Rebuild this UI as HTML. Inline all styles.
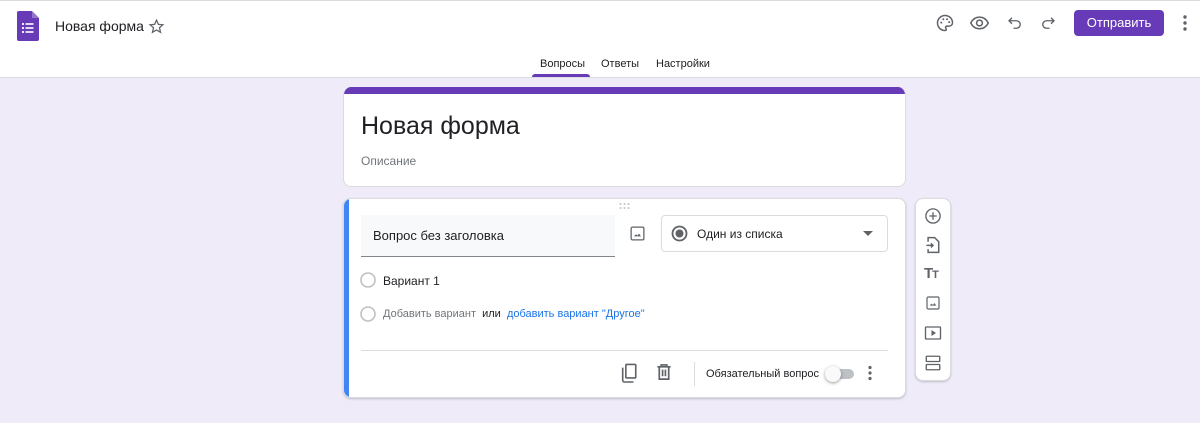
<!DOCTYPE html>
<html><head><meta charset="utf-8"><style>
*{margin:0;padding:0;box-sizing:border-box}
body{width:1200px;height:423px;background:#f0ebf8;font-family:"Liberation Sans",Arial,sans-serif;position:relative;overflow:hidden;color:#202124}
.a{position:absolute}
.hdr{left:0;top:0;width:1200px;height:78px;background:#fff;border-top:1px solid #dadce0;border-bottom:1px solid #dadce0}
.card{background:#fff;border-radius:8px;border:1px solid #dadce0}
svg{display:block}
.ic{fill:none;stroke:#5f6368;stroke-width:1.8}
</style></head><body>
<div class="a hdr"></div>
<svg class="a" style="left:17px;top:11px" width="22" height="30" viewBox="0 0 22 30"><path d="M2 0h13l7 7v21a2 2 0 0 1-2 2H2a2 2 0 0 1-2-2V2a2 2 0 0 1 2-2z" fill="#673ab7"/><path d="M15 0l7 7h-7z" fill="#9575cd"/><g fill="#fff"><circle cx="6" cy="13" r="1.1"/><circle cx="6" cy="17" r="1.1"/><circle cx="6" cy="21" r="1.1"/><rect x="8.5" y="12.2" width="8" height="1.6"/><rect x="8.5" y="16.2" width="8" height="1.6"/><rect x="8.5" y="20.2" width="8" height="1.6"/></g></svg>
<div class="a" style="left:55px;top:18px;font-size:14px;color:#202124">Новая форма</div>
<svg class="a" style="left:148px;top:18px" width="17" height="17" viewBox="0 0 24 24"><path d="M12 3l2.7 6 6.3.6-4.8 4.2 1.5 6.4L12 16.9 6.3 20.2l1.5-6.4L3 9.6l6.3-.6z" class="ic" stroke-width="1.7"/></svg>
<svg class="a" style="left:935px;top:13px" width="20" height="20" viewBox="0 0 24 24"><path d="M12 3a9 9 0 0 0 0 18c1 0 1.5-.7 1.5-1.5 0-1-.8-1.3-.8-2.2 0-1 .8-1.6 1.8-1.6H17a4 4 0 0 0 4-4C21 6.8 17 3 12 3z" class="ic"/><circle cx="7.5" cy="11.5" r="1.2" fill="#5f6368"/><circle cx="10" cy="7.5" r="1.2" fill="#5f6368"/><circle cx="14.5" cy="7.5" r="1.2" fill="#5f6368"/><circle cx="17" cy="11" r="1.2" fill="#5f6368"/></svg>
<svg class="a" style="left:969px;top:13px" width="21" height="20" viewBox="0 0 24 24"><path d="M1.5 12C4 7 8 5 12 5s8 2 10.5 7C20 17 16 19 12 19s-8-2-10.5-7z" class="ic"/><circle cx="12" cy="12" r="3.5" class="ic"/></svg>
<svg class="a" style="left:1006px;top:13px" width="18" height="20" viewBox="0 0 24 24"><path d="M8 5L4 9l4 4M4 9h10a5 5 0 0 1 0 10h-4" class="ic" stroke-width="2"/></svg>
<svg class="a" style="left:1039px;top:13px" width="18" height="20" viewBox="0 0 24 24"><path d="M16 5l4 4-4 4M20 9H10a5 5 0 0 0 0 10h4" class="ic" stroke-width="2"/></svg>
<div class="a" style="left:1074px;top:10px;width:90px;height:26px;background:#673ab7;border-radius:4px;color:#fff;font-size:13px;text-align:center;line-height:26px">Отправить</div>
<svg class="a" style="left:1182px;top:14px" width="6" height="18"><circle cx="3" cy="3" r="1.7" fill="#5f6368"/><circle cx="3" cy="9" r="1.7" fill="#5f6368"/><circle cx="3" cy="15" r="1.7" fill="#5f6368"/></svg>
<div class="a" style="left:540px;top:58px;font-size:11px;color:#202124">Вопросы</div>
<div class="a" style="left:532px;top:74px;width:58px;height:3px;background:#673ab7;border-radius:3px 3px 0 0"></div>
<div class="a" style="left:601px;top:58px;font-size:11px;color:#202124">Ответы</div>
<div class="a" style="left:656px;top:58px;font-size:11px;color:#202124">Настройки</div>
<div class="a card" style="left:343px;top:87px;width:563px;height:100px;border-top:none;overflow:hidden"><div style="height:7px;background:#673ab7"></div></div>
<div class="a" style="left:361px;top:112px;font-size:25px;color:#202124">Новая форма</div>
<div class="a" style="left:361px;top:154px;font-size:12px;color:#70757a">Описание</div>
<div class="a card" style="left:343px;top:198px;width:563px;height:200px;overflow:hidden;box-shadow:0 1px 2px rgba(0,0,0,.2)"><div style="position:absolute;left:0;top:0;width:5px;height:100%;background:#4285f4"></div></div>
<svg class="a" style="left:619px;top:203px" width="12" height="6"><g fill="#bdc1c6"><circle cx="1.5" cy="1" r="1"/><circle cx="5.5" cy="1" r="1"/><circle cx="9.5" cy="1" r="1"/><circle cx="1.5" cy="5" r="1"/><circle cx="5.5" cy="5" r="1"/><circle cx="9.5" cy="5" r="1"/></g></svg>
<div class="a" style="left:361px;top:215px;width:254px;height:42px;background:#f8f9fa;border-bottom:1px solid #80868b"></div>
<div class="a" style="left:373px;top:228px;font-size:13px">Вопрос без заголовка</div>
<svg class="a" style="left:629px;top:225px" width="17" height="17" viewBox="0 0 24 24"><rect x="3" y="3" width="18" height="18" rx="2" class="ic" stroke-width="2"/><path d="M7 16l3-3 2 2 2-3 3 4z" fill="#5f6368"/></svg>
<div class="a" style="left:661px;top:215px;width:227px;height:37px;border:1px solid #dadce0;border-radius:4px"></div>
<svg class="a" style="left:671px;top:225px" width="17" height="17"><circle cx="8.5" cy="8.5" r="7" fill="none" stroke="#5f6368" stroke-width="1.8"/><circle cx="8.5" cy="8.5" r="4" fill="#5f6368"/></svg>
<div class="a" style="left:697px;top:227px;font-size:12px">Один из списка</div>
<svg class="a" style="left:863px;top:231px" width="10" height="6"><path d="M0 0h10L5 5z" fill="#5f6368"/></svg>
<svg class="a" style="left:360px;top:272px" width="16" height="16"><circle cx="8" cy="8" r="7" fill="none" stroke="#bdc1c6" stroke-width="1.6"/></svg>
<div class="a" style="left:383px;top:274px;font-size:12px">Вариант 1</div>
<svg class="a" style="left:360px;top:306px" width="16" height="16"><circle cx="8" cy="8" r="7" fill="none" stroke="#bdc1c6" stroke-width="1.6"/></svg>
<div class="a" style="left:383px;top:308px;font-size:11px;color:#70757a;white-space:nowrap">Добавить вариант <span style="color:#202124">&nbsp;или&nbsp;</span> <span style="color:#1a73e8">добавить вариант "Другое"</span></div>
<div class="a" style="left:361px;top:350px;width:527px;height:1px;background:#dadce0"></div>
<svg class="a" style="left:620px;top:363px" width="18" height="20" viewBox="0 0 20 22"><path d="M3 5v14a2 2 0 0 0 2 2h10" class="ic" stroke-width="1.8"/><rect x="6.5" y="1.5" width="11" height="15" rx="1" class="ic" stroke-width="1.8"/></svg>
<svg class="a" style="left:656px;top:364px" width="16" height="17" viewBox="0 0 16 18"><path d="M1 3h14M5 3V1h6v2M3 3v13h10V3M6.5 6v7M9.5 6v7" class="ic" stroke-width="1.7"/></svg>
<div class="a" style="left:694px;top:362px;width:1px;height:24px;background:#dadce0"></div>
<div class="a" style="left:706px;top:368px;font-size:11px;color:#202124;white-space:nowrap">Обязательный вопрос</div>
<div class="a" style="left:830px;top:369px;width:24px;height:10px;background:#bdc1c6;border-radius:5px"></div>
<div class="a" style="left:825px;top:366px;width:16px;height:16px;background:#fafafa;border-radius:50%;box-shadow:0 1px 3px rgba(0,0,0,.4)"></div>
<svg class="a" style="left:867px;top:365px" width="6" height="16"><circle cx="3" cy="2.5" r="1.6" fill="#5f6368"/><circle cx="3" cy="8" r="1.6" fill="#5f6368"/><circle cx="3" cy="13.5" r="1.6" fill="#5f6368"/></svg>
<div class="a card" style="left:915px;top:198px;width:36px;height:183px;box-shadow:0 1px 2px rgba(0,0,0,.2)"></div>
<svg class="a" style="left:924px;top:207px" width="18" height="18" viewBox="0 0 24 24"><circle cx="12" cy="12" r="9.5" class="ic" stroke-width="2"/><path d="M12 7v10M7 12h10" class="ic" stroke-width="2"/></svg>
<svg class="a" style="left:925px;top:236px" width="16" height="18" viewBox="0 0 18 22"><path d="M3 7V2h8l5 5v13H3v-4" class="ic" stroke-width="1.8"/><path d="M1 11.5h8M6.5 9l2.5 2.5-2.5 2.5" class="ic" stroke-width="1.8"/></svg>
<div class="a" style="left:924px;top:265px;font-size:15px;font-weight:bold;color:#5f6368;letter-spacing:-1px">T<span style="font-size:11px">T</span></div>
<svg class="a" style="left:925px;top:295px" width="16" height="16" viewBox="0 0 24 24"><rect x="3" y="3" width="18" height="18" rx="2" class="ic" stroke-width="2.2"/><path d="M7 16l3-3 2 2 2-3 3 4z" fill="#5f6368"/></svg>
<svg class="a" style="left:924px;top:325px" width="18" height="16" viewBox="0 0 24 20"><rect x="2" y="2" width="20" height="16" rx="1" class="ic" stroke-width="2"/><path d="M10 6v8l6-4z" fill="#5f6368"/></svg>
<svg class="a" style="left:924px;top:354px" width="18" height="18" viewBox="0 0 24 24"><rect x="3" y="3" width="18" height="7" rx="1" class="ic" stroke-width="2"/><rect x="3" y="14" width="18" height="7" rx="1" class="ic" stroke-width="2"/></svg>
</body></html>
